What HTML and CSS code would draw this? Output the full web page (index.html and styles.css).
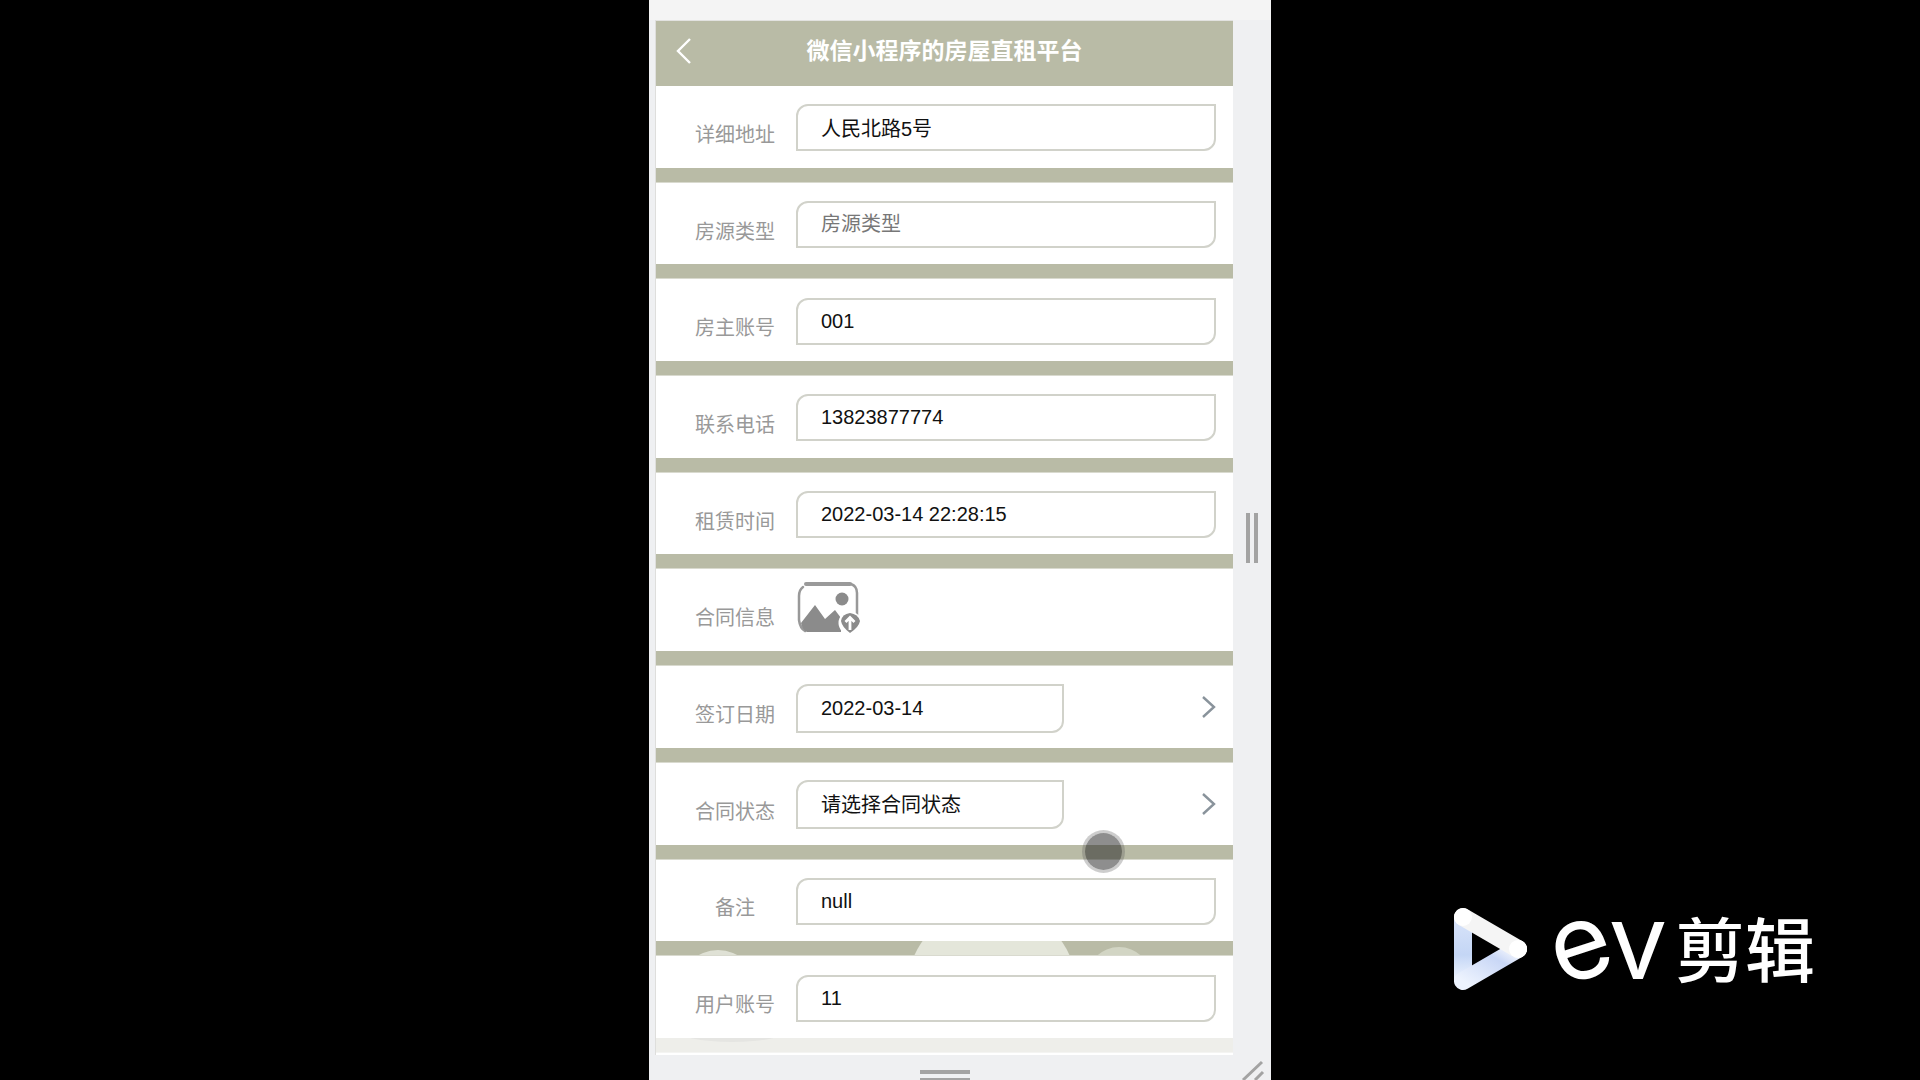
FILE: index.html
```html
<!DOCTYPE html>
<html lang="zh-CN">
<head>
<meta charset="utf-8">
<title>微信小程序的房屋直租平台</title>
<link rel="stylesheet" href="styles.css">
</head>
<body>
<div class="stage">
  <main class="device">
    <div class="viewport">
      <div class="screen">
        <header class="navbar">
          <button class="back" type="button" aria-label="返回">
            <svg width="18" height="28" viewBox="0 0 18 28"><path d="M15 2 3 14l12 12" fill="none" stroke="#fff" stroke-width="2.4"/></svg>
          </button>
          <h1>微信小程序的房屋直租平台</h1>
        </header>
        <form class="form">
          <div class="item"><div class="row"><label for="addr">详细地址</label><input id="addr" type="text" class="field" value="人民北路5号"></div><div class="band"></div></div>
          <div class="item"><div class="row"><label for="kind">房源类型</label><input id="kind" type="text" class="field" placeholder="房源类型"></div><div class="band"></div></div>
          <div class="item"><div class="row"><label for="owner">房主账号</label><input id="owner" type="text" class="field" value="001"></div><div class="band"></div></div>
          <div class="item"><div class="row"><label for="tel">联系电话</label><input id="tel" type="text" class="field" value="13823877774"></div><div class="band"></div></div>
          <div class="item"><div class="row"><label for="time">租赁时间</label><input id="time" type="text" class="field" value="2022-03-14 22:28:15"></div><div class="band"></div></div>
          <div class="item"><div class="row"><label for="upload">合同信息</label>
            <button id="upload" class="upload" type="button">
              <svg width="64" height="52" viewBox="-1 0 64 52">
                <path d="M9 2h44" stroke="#9a9a9a" stroke-width="4" stroke-linecap="round"/>
                <path d="M54 2q6 2 6 9v22M6 5Q2 8 2 14v24q1 8 6 11" fill="none" stroke="#999" stroke-width="2.5" stroke-linecap="round"/>
                <circle cx="45" cy="17" r="6.500" fill="#8b8b8b"/>
                <path d="M4 41 18 23l10 14 10-9 6 8v14H10q-4-1-6-9z" fill="#8b8b8b"/>
                <circle cx="53" cy="41" r="11.500" fill="#fff"/>
                <path d="M53 31q8 1 10 8-1 6-10 12-8-6-9-12 1-7 9-8z" fill="#8b8b8b"/>
                <path d="M53 48V36M48.500 40l4.500-4.500 4.500 4.500" fill="none" stroke="#fff" stroke-width="2.8"/>
              </svg>
            </button></div><div class="band"></div></div>
          <div class="item"><div class="row"><label for="date">签订日期</label><input id="date" type="text" class="field short" value="2022-03-14">
            <svg class="arrow" width="14" height="24" viewBox="0 0 14 24"><path d="M1 1l11 10L1 21" fill="none" stroke="#89939b" stroke-width="2.400"/></svg></div><div class="band"></div></div>
          <div class="item"><div class="row"><label for="state">合同状态</label><select id="state" class="field short"><option>请选择合同状态</option></select>
            <svg class="arrow" width="14" height="24" viewBox="0 0 14 24"><path d="M1 1l11 10L1 21" fill="none" stroke="#89939b" stroke-width="2.400"/></svg></div><div class="band"></div></div>
          <div class="item"><div class="row"><label for="note">备注</label><input id="note" type="text" class="field" value="null"></div><div class="band">
            <svg width="577" height="15" viewBox="0 0 577 15"><circle cx="336" cy="49" r="85" fill="#e4e6da"/><circle cx="62" cy="48" r="39" fill="#dfe1d5"/><circle cx="463" cy="38" r="32" fill="#d2d5c4"/></svg></div></div>
          <div class="item"><div class="row"><label for="user">用户账号</label><input id="user" type="text" class="field" value="11"></div><div class="band pale">
            <svg width="577" height="15" viewBox="0 0 577 15"><ellipse cx="76" cy="-8" rx="56" ry="12" fill="#e5e5e2"/></svg></div></div>
        </form>
        <span class="touch"></span>
      </div>
      <div class="drag-x"></div>
    </div>
    <div class="footer">
      <span></span>
      <div class="drag-y"></div>
      <svg class="grip" width="24" height="20" viewBox="0 0 24 20"><path d="M2 20 21 2M14 20l8-8" stroke="#a3a3a3" stroke-width="3" fill="none"/></svg>
    </div>
  </main>
  <aside class="brand">
    <svg width="74" height="84" viewBox="0 0 74 84">
      <defs>
        <linearGradient id="g1" x1="0" y1="0" x2="0" y2="1"><stop offset="0" stop-color="#d9e4fa"/><stop offset=".6" stop-color="#c4d6f5"/><stop offset="1" stop-color="#eef4ff"/></linearGradient>
        <linearGradient id="g2" x1="0" y1="1" x2="1" y2="0"><stop offset="0" stop-color="#edf3fe"/><stop offset=".65" stop-color="#c9d7f6"/><stop offset="1" stop-color="#fff"/></linearGradient>
      </defs>
      <path d="M0 10h18v63H0z" fill="url(#g1)"/>
      <g stroke-width="18" stroke-linecap="round">
        <path d="M9 74 64 42" stroke="url(#g2)"/>
        <path d="M9 10l55 32" stroke="#f5f5f5"/>
      </g>
      <circle cx="64" cy="42" r="9" fill="#fff"/><circle cx="9" cy="10" r="9" fill="#fff"/>
    </svg>
    <span class="ev"><span class="tilt">e</span><span>v</span></span>
    <span class="cn">剪辑</span>
  </aside>
</div>
</body>
</html>
```
FILE: styles.css
```css
* { box-sizing: border-box; }
body {
  margin: 0;
  background: #000;
  font-family: "Liberation Sans", "Noto Sans CJK SC", sans-serif;
  font-size: 20px;
}
.stage {
  display: grid;
  grid-template-columns: minmax(0, 1fr) minmax(0, 622px) minmax(0, 1fr);
  min-height: 100vh;
}
.device {
  grid-column: 2;
  display: flex;
  flex-direction: column;
  background: #eff0f2;
  border-top: 20px solid #f4f4f4;
}
.viewport { flex: 1; display: flex; padding-left: 6px; }
.screen {
  flex: 1;
  position: relative;
  display: flex;
  flex-direction: column;
  background: #fff;
  border-top: 1px solid #e2e2e0;
  border-left: 1px solid #dededc;
  padding-bottom: 2px;
}
.navbar {
  height: 65px;
  display: grid;
  grid-template-columns: 56px 1fr 56px;
  align-items: center;
  background: #b9bba6;
  padding-bottom: 6px;
}
.navbar h1 {
  margin: 0;
  color: #fff;
  font-size: 23px;
  line-height: 32px;
  text-align: center;
}
.back {
  display: flex;
  justify-content: center;
  height: 28px;
  padding: 0;
  border: 0;
  background: none;
}
.back svg, .upload svg, .band svg { display: block; }
.form { flex: 1; display: grid; grid-auto-rows: 1fr; }
.item { display: flex; flex-direction: column; }
.row {
  flex: 1;
  display: flex;
  align-items: center;
  gap: 21px;
  padding: 2px 17px 0 39px;
  background: #fff;
}
.row label {
  width: 80px;
  padding-top: 14px;
  color: #999;
  line-height: 28px;
  text-align: center;
  white-space: nowrap;
}
.field {
  flex: 1;
  min-width: 0;
  height: 47px;
  padding: 0 23px;
  border: 2px solid #d1d2ca;
  border-radius: 12px 0;
  background: #fff;
  color: #111;
  font: inherit;
  appearance: none;
  outline: 0;
}
.field::placeholder { color: #777; opacity: 1; }
.field.short { flex: 0 1 268px; height: 49px; }
.arrow { margin-left: auto; }
.band { height: 15px; background: #b9bba6; border-bottom: 1px solid #d9dacf; overflow: hidden; }
.band.pale { background: #eeeeea; border-color: #f4f4f2; }
.upload { border: 0; padding: 0; background: none; margin-top: -6px; }
.touch {
  position: absolute;
  left: 426px;
  bottom: 182px;
  width: 43px;
  height: 43px;
  border: 3px solid rgba(90, 90, 90, .3);
  border-radius: 50%;
  background: rgba(30, 30, 30, .5);
  background-clip: padding-box;
}
.drag-x {
  align-self: center;
  width: 12px;
  height: 50px;
  margin: 0 13px;
  border: solid #a3a3a3;
  border-width: 0 4px;
}
.footer {
  height: 25px;
  display: grid;
  grid-template-columns: 271px 50px 1fr;
  align-items: end;
  padding-right: 6px;
}
.drag-y { height: 10px; border: solid #a3a3a3; border-width: 4px 0 2px; }
.grip { justify-self: end; display: block; }
.brand {
  grid-column: 3;
  display: flex;
  align-items: center;
  align-self: end;
  height: 84px;
  margin-bottom: 89px;
  padding-left: 183px;
  color: #fff;
  white-space: nowrap;
}
.ev {
  display: flex;
  margin-left: 20px;
  padding-bottom: 16px;
  font-family: Inter, sans-serif;
  font-size: 104px;
  line-height: 112px;
}
.tilt { transform: rotate(-18deg); }
.cn {
  margin-left: 8px;
  padding-bottom: 4px;
  font-family: "Noto Sans CJK SC", sans-serif;
  font-size: 70px;
  font-weight: 500;
  line-height: 84px;
}
```
